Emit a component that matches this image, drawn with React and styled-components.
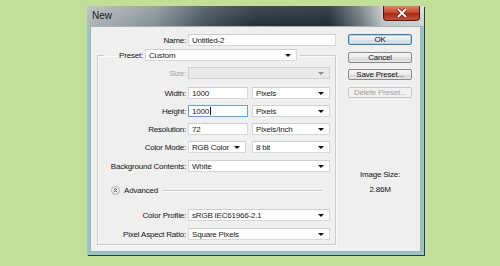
import React from 'react';
import styled, {createGlobalStyle, css} from 'styled-components';

const GlobalStyle = createGlobalStyle`
  html, body {
    margin: 0;
    padding: 0;
    background: #c1df99;
  }
  * {
    box-sizing: border-box;
  }
`;

const Page = styled.div`
  width: 500px;
  height: 266px;
  padding: 6px 0 0 87px;
  font-family: 'Liberation Sans', Arial, sans-serif;
  font-size: 8px;
  letter-spacing: -0.2px;
  color: #141414;
`;

const Window = styled.div`
  width: 337px;
  box-shadow: 1px 1px 0 #2e3b3c;
`;

const TitleBar = styled.div`
  height: 20px;
  display: flex;
  align-items: flex-start;
  justify-content: space-between;
  padding-right: 4px;
  background: linear-gradient(180deg, rgba(255, 255, 255, 0.12), rgba(0, 0, 0, 0.05)),
    linear-gradient(90deg, #b6bec1 0%, #8d979b 20%, #4a555e 35%, #28313a 50%, #242d35 72%, #7b868b 82%, #c9d0d2 88%, #d6dcde 100%);
`;

const Title = styled.span`
  font-size: 10px;
  letter-spacing: 0;
  line-height: 20px;
  padding-left: 5px;
  color: #141a1e;
`;

const CloseButton = styled.div`
  width: 37px;
  height: 15px;
  display: flex;
  align-items: center;
  justify-content: center;
  border: 1px solid #4d1a12;
  border-top: none;
  border-radius: 0 0 4px 4px;
  background: linear-gradient(180deg, #e0836f 0%, #c9472f 45%, #a92a17 55%, #c8503a 100%);
`;

const Frame = styled.div`
  padding: 0 3px 3px 3px;
  background: #95c6c4;
`;

const Body = styled.div`
  display: flex;
  background: #efefef;
  border: 1px solid #a6b1b4;
  padding: 7px 0 6px 0;
`;

const FormCol = styled.div`
  width: 246px;
`;

const SideCol = styled.div`
  width: 64px;
  margin-left: 11px;
  display: flex;
  flex-direction: column;
  gap: 6.6px;
`;

const Row = styled.div`
  display: flex;
  align-items: center;
  height: 12px;
  margin-top: ${({$top}) => $top || 0}px;
`;

const Label = styled.span`
  flex: none;
  width: ${({$width}) => $width || 90}px;
  padding-right: 2px;
  text-align: right;
  white-space: nowrap;
  color: ${({$disabled}) => ($disabled ? '#a3a3a3' : '#141414')};
`;

const Field = styled.div`
  flex: none;
  display: flex;
  align-items: center;
  width: ${({$width}) => $width}px;
  height: 12px;
  margin-right: ${({$gap}) => $gap || 0}px;
  padding: 0 5px 0 3px;
  background: #fff;
  border: 1px solid #d8d8d8;
  border-top-color: #cfcfcf;
  white-space: nowrap;
  color: #1a1a1a;

  ${({$disabled}) =>
    $disabled &&
    css`
      background: #e9e9e9;
      border-color: #d0d0d0;
    `};

  ${({$focused}) =>
    $focused &&
    css`
      border-color: #6b9fd2;
    `};
`;

const Arrow = styled.i`
  margin-left: auto;
  width: 0;
  height: 0;
  border-left: 3px solid transparent;
  border-right: 3px solid transparent;
  border-top: 3px solid ${({$disabled}) => ($disabled ? '#8a8a8a' : '#111')};
`;

const Caret = styled.i`
  width: 1px;
  height: 8px;
  background: #111;
  margin-left: 1px;
`;

const GroupBox = styled.fieldset`
  width: 239px;
  margin: 3px 0 0 6px;
  padding: 0 4px 4px 0;
  border: 1px solid #cbcbcb;
  box-shadow: 1px 1px 0 #fafafa, inset 1px 1px 0 #fafafa;
  min-width: 0;
`;

const Legend = styled.legend`
  display: flex;
  align-items: center;
  height: 12px;
  margin-left: 6px;
  padding: 0 3px 0 0;
`;

const Advanced = styled.div`
  display: flex;
  align-items: center;
  height: 10px;
  margin-top: 13px;
  padding-left: 13px;
  padding-right: 9px;
`;

const AdvancedText = styled.span`
  margin-left: 4px;
`;

const Rule = styled.div`
  flex: 1;
  height: 1px;
  margin-left: 5px;
  background: #c9c9c9;
  box-shadow: 0 1px 0 #fafafa;
`;

const Button = styled.div`
  height: 11px;
  display: flex;
  align-items: center;
  justify-content: center;
  border: 1px solid #8b8b8b;
  border-radius: 2px;
  background: linear-gradient(180deg, #f6f6f6 0%, #e9e9e9 50%, #d9d9d9 51%, #e4e4e4 100%);
  color: #141414;

  ${({$primary}) =>
    $primary &&
    css`
      border-color: #3e7cae;
      box-shadow: inset 0 0 0 1px #a9d5f1;
    `};

  ${({$disabled}) =>
    $disabled &&
    css`
      border-color: #c6c6c6;
      background: #f1f1f1;
      color: #a3a3a3;
    `};
`;

const SizeInfo = styled.div`
  margin-top: 63px;
  text-align: center;
  line-height: 15px;
`;

function CloseIcon() {
  return (
    <svg width="12" height="10" viewBox="0 0 12 10">
      <path d="M2 1 L10 9 M10 1 L2 9" stroke="#5a1a10" strokeWidth="3.2" />
      <path d="M2 1 L10 9 M10 1 L2 9" stroke="#fff" strokeWidth="1.8" />
    </svg>
  );
}

function CollapseIcon() {
  return (
    <svg width="9" height="9" viewBox="0 0 9 9">
      <circle cx="4.5" cy="4.5" r="4" fill="#f7f7f7" stroke="#9a9a9a" strokeWidth="0.8" />
      <path d="M2.8 4 L4.5 2.6 L6.2 4 M2.8 6.2 L4.5 4.8 L6.2 6.2" fill="none" stroke="#333" strokeWidth="0.9" />
    </svg>
  );
}

const Select = ({width, gap, disabled, children}) => (
  <Field $width={width} $gap={gap} $disabled={disabled}>
    {children}
    <Arrow $disabled={disabled} />
  </Field>
);

export default function App() {
  return (
    <Page>
      <GlobalStyle />
      <Window>
        <TitleBar>
          <Title>New</Title>
          <CloseButton>
            <CloseIcon />
          </CloseButton>
        </TitleBar>
        <Frame>
          <Body>
            <FormCol>
              <Row>
                <Label $width={97}>Name:</Label>
                <Field $width={148}>Untitled-2</Field>
              </Row>
              <GroupBox>
                <Legend>
                  <Label $width={41}>Preset:</Label>
                  <Select width={152}>Custom</Select>
                </Legend>
                <Row $top={6}>
                  <Label $disabled>Size:</Label>
                  <Select width={142} disabled />
                </Row>
                <Row $top={8}>
                  <Label>Width:</Label>
                  <Field $width={60} $gap={4}>1000</Field>
                  <Select width={78}>Pixels</Select>
                </Row>
                <Row $top={6}>
                  <Label>Height:</Label>
                  <Field $width={60} $gap={4} $focused>
                    1000
                    <Caret />
                  </Field>
                  <Select width={78}>Pixels</Select>
                </Row>
                <Row $top={6}>
                  <Label>Resolution:</Label>
                  <Field $width={60} $gap={4}>72</Field>
                  <Select width={78}>Pixels/Inch</Select>
                </Row>
                <Row $top={6}>
                  <Label>Color Mode:</Label>
                  <Select width={58} gap={6}>RGB Color</Select>
                  <Select width={78}>8 bit</Select>
                </Row>
                <Row $top={7}>
                  <Label>Background Contents:</Label>
                  <Select width={142}>White</Select>
                </Row>
                <Advanced>
                  <CollapseIcon />
                  <AdvancedText>Advanced</AdvancedText>
                  <Rule />
                </Advanced>
                <Row $top={14}>
                  <Label>Color Profile:</Label>
                  <Select width={142}>sRGB IEC61966-2.1</Select>
                </Row>
                <Row $top={7}>
                  <Label>Pixel Aspect Ratio:</Label>
                  <Select width={142}>Square Pixels</Select>
                </Row>
              </GroupBox>
            </FormCol>
            <SideCol>
              <Button $primary>OK</Button>
              <Button>Cancel</Button>
              <Button>Save Preset...</Button>
              <Button $disabled>Delete Preset...</Button>
              <SizeInfo>
                Image Size:
                <br />
                2.86M
              </SizeInfo>
            </SideCol>
          </Body>
        </Frame>
      </Window>
    </Page>
  );
}
